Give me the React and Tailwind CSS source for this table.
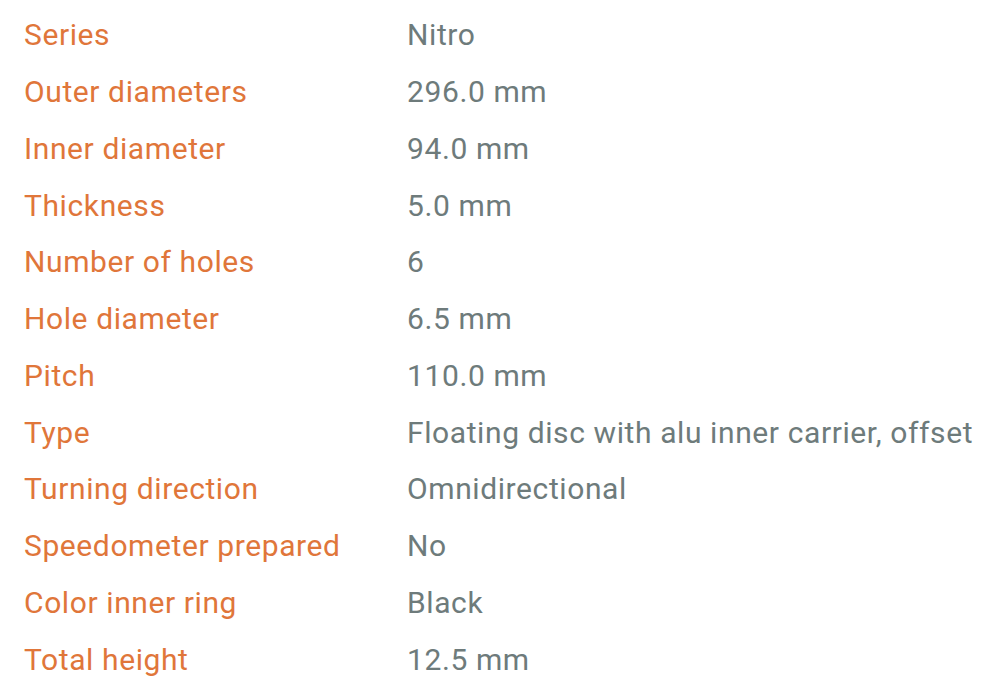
import React from 'react';

const specs = [
  ['Series', 'Nitro'],
  ['Outer diameters', '296.0 mm'],
  ['Inner diameter', '94.0 mm'],
  ['Thickness', '5.0 mm'],
  ['Number of holes', '6'],
  ['Hole diameter', '6.5 mm'],
  ['Pitch', '110.0 mm'],
  ['Type', 'Floating disc with alu inner carrier, offset'],
  ['Turning direction', 'Omnidirectional'],
  ['Speedometer prepared', 'No'],
  ['Color inner ring', 'Black'],
  ['Total height', '12.5 mm'],
];

export default function App() {
  return (
    <div className="w-[1000px] h-[690px] bg-white pt-[7px] pl-[24px] overflow-hidden"
      style={{ fontFamily: 'Roboto, "Liberation Sans", sans-serif' }}>
      {specs.map(([label, value]) => (
        <div key={label} className="flex items-center h-[56.75px] text-[30px] tracking-[0.6px] leading-none">
          <div className="w-[383px] text-[#e0763a]">{label}</div>
          <div className="text-[#6e7b7b] whitespace-nowrap">{value}</div>
        </div>
      ))}
    </div>
  );
}
